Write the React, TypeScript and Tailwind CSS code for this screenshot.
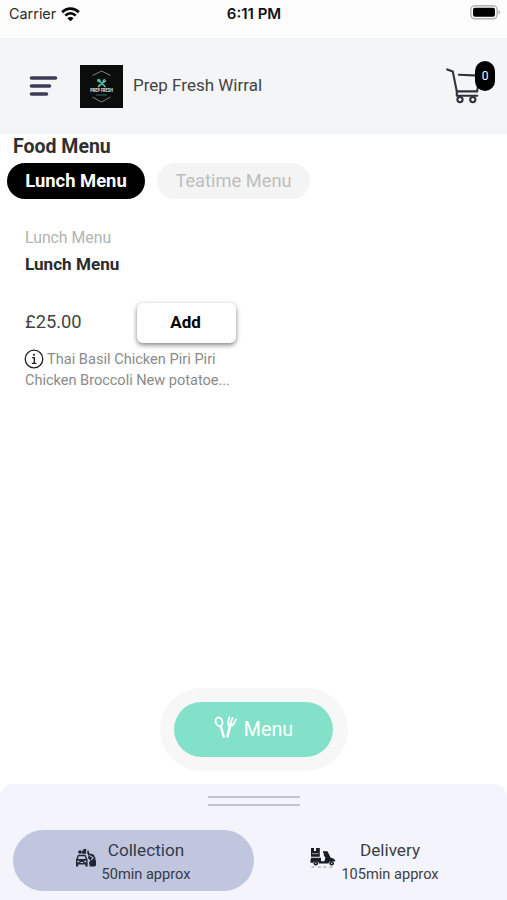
import React from 'react';

const WifiIcon = () => (
  <svg className="h-[15px] w-[19px]" viewBox="0 0 19 15" fill="none" stroke="#000" strokeWidth="2.7">
    <path d="M1.2 5.2C6 .3 13 .3 17.8 5.2" />
    <path d="M4.3 8.6C7.4 5.6 11.6 5.6 14.7 8.6" />
    <path d="M9.5 14.2L6.4 11.2C8.2 9.6 10.8 9.6 12.6 11.2Z" fill="#000" stroke="none" />
  </svg>
);

const BatteryIcon = () => (
  <svg className="h-[15px] w-[31px]" viewBox="0 0 31 15">
    <rect x="0.8" y="0.8" width="26.4" height="13" rx="4" fill="#fbfbfb" stroke="#b4b4b2" strokeWidth="1.5" />
    <rect x="3" y="2.8" width="22" height="9" rx="2" fill="#000" />
    <path d="M28.6 5C30.5 6 30.5 8.6 28.6 9.6Z" fill="#a9a9a7" />
  </svg>
);

const MenuLines = () => (
  <svg className="h-[22px] w-[29px]" viewBox="0 0 29 22" stroke="#3e3b57" strokeWidth="3.6" strokeLinecap="round">
    <path d="M2.5 3H26.5M2.5 11H20.5M2.5 19H17.5" />
  </svg>
);

const BrandLogo = () => (
  <svg className="h-[43px] w-[43px]" viewBox="0 0 43 43" fill="none">
    <rect width="43" height="43" fill="#0b0c0c" />
    <path d="M12.5 10.5L21.5 6L30.5 10.5M12.5 32L21.5 37L30.5 32" stroke="#8b8f8f" strokeWidth="0.9" />
    <path d="M19 15.5L25 21.5M24 16.5L18.5 21.5" stroke="#4fc3a6" strokeWidth="1.7" strokeLinecap="round" />
    <ellipse cx="18.9" cy="15.6" rx="1.6" ry="2" transform="rotate(-45 18.9 15.6)" fill="#4fc3a6" />
    <path d="M23 15.8L24.7 14.1M24.2 17L25.9 15.3" stroke="#7fe0c8" strokeWidth="1.2" />
    <text
      x="10.3"
      y="27.4"
      textLength="22.6"
      lengthAdjust="spacingAndGlyphs"
      fontSize="5.2"
      fontWeight="900"
      fill="#d9dcdc"
      fontFamily="Roboto, sans-serif"
    >
      PREP FRESH
    </text>
    <path d="M16 30H27" stroke="#2b5f55" strokeWidth="1.2" />
  </svg>
);

const CartIcon = () => (
  <svg className="h-[38px] w-[36px]" viewBox="0 0 36 38" fill="none" stroke="#2f3237" strokeWidth="2.1" strokeLinecap="round" strokeLinejoin="round">
    <path d="M1.2 2.4L6.8 4.6L10.8 24.4H31.2L33 8.6L12.8 7.8" />
    <path d="M10.8 24.4V28.8H31.3" />
    <circle cx="14" cy="32.6" r="2.6" />
    <circle cx="26.8" cy="32.6" r="2.6" />
  </svg>
);

const InfoIcon = () => (
  <svg className="h-[20px] w-[20px] shrink-0" viewBox="0 0 20 20" fill="none" stroke="#222">
    <circle cx="10" cy="10" r="8.8" strokeWidth="1.3" />
    <circle cx="10" cy="5.8" r="1.1" fill="#222" stroke="none" />
    <path d="M8 8.6H10.3V14.2M7.8 14.4H12.5" strokeWidth="1.4" />
  </svg>
);

const CutleryIcon = () => (
  <svg className="h-[24px] w-[23px]" viewBox="0 0 23 24" fill="none" stroke="#fff" strokeWidth="1.8" strokeLinecap="round" strokeLinejoin="round">
    <ellipse cx="5" cy="6.8" rx="3.3" ry="4.5" transform="rotate(-20 5 6.8)" />
    <path d="M6.7 11.1L9.7 21.6" strokeWidth="2.4" />
    <path d="M15.4 2.3L14 7.5C13.6 9.2 14.4 10.5 16 11C17.7 11.4 19.1 10.6 19.8 9L21.9 4.2M18.5 2.8L16.8 8.3" />
    <path d="M16 11L13.4 21.6" strokeWidth="2.6" />
    <path d="M15 8.6L18.4 9.2" strokeWidth="2.2" />
  </svg>
);

const CollectionIcon = () => (
  <svg className="h-[20px] w-[22px]" viewBox="0 0 22 20" fill="#202635">
    <path d="M1 11.5L3 6.8H10.4L12.6 11.5V18.5H10.4V16.5H3.2V18.5H1Z" />
    <path d="M3.9 8.2H9.6L10.8 11H2.7Z" fill="#bec5dc" />
    <path d="M2.3 12.8H4.4V14.2H2.3ZM9.3 12.8H11.4V14.2H9.3ZM5.5 14H8.2V15H5.5Z" fill="#bec5dc" />
    <circle cx="5" cy="4" r="1.8" />
    <path d="M6.6 4.6L8.4 1.2L11.2 .8L11 5.8H7Z" />
    <path d="M13 1.5L14.6 5.5L18.6 6.6L20.4 10V12L21 12.6V17.5L19.5 18.5H14.7L14 14.3L15.5 12.8L12.8 9.8L13.6 8L12 4.8Z" />
    <path d="M14.4 7.4L18.2 9.8L16.2 12" fill="none" stroke="#bec5dc" strokeWidth="1.1" />
  </svg>
);

const DeliveryIcon = () => (
  <svg className="h-[21px] w-[26px]" viewBox="0 0 26 21" fill="#191d25">
    <path d="M1 1H4V4H6V1H9.8V9.8H1Z" />
    <path d="M2 6.7H8.8" stroke="#f3f4fc" strokeWidth="0.6" />
    <path d="M1 10.8H11V14.2H14.4L15.4 10.6L13.8 8.5V6H13V4.2H17.5L20.7 10.7C23.7 11 25 12.5 25.5 14.2H21.5C19.5 14.2 18.6 15.7 18.4 16.6H9.1C8.4 13.7 4 13.4 2.6 16.1L.3 15.6Z" />
    <circle cx="5.8" cy="16.2" r="2.3" />
    <circle cx="21.7" cy="16.2" r="2.3" />
    <circle cx="5.8" cy="16.2" r="0.7" fill="#eef0f9" />
    <circle cx="21.7" cy="16.2" r="0.7" fill="#eef0f9" />
    <path d="M1.5 20H4.5M8 20H11M13.5 20H16.5M19.5 20H22.5" stroke="#777a84" strokeWidth="0.8" />
  </svg>
);

interface OrderModeProps {
  icon: React.ReactNode;
  label: string;
  wait: string;
  active?: boolean;
}

const OrderMode: React.FC<OrderModeProps> = ({ icon, label, wait, active = false }) => (
  <button
    className={`flex h-[61px] w-[241px] items-center justify-center gap-[5px] rounded-full ${
      active ? 'bg-[#bfc6dd] pr-[2px] text-[#353a49]' : 'text-[#3b3e48]'
    }`}
  >
    <span className="mt-[-6px]">{icon}</span>
    <span className="flex flex-col items-center pt-[2px]">
      <span className="text-[17.2px] leading-[25px]">{label}</span>
      <span className="text-[14.6px] leading-[23px]">{wait}</span>
    </span>
  </button>
);

export default function App() {
  return (
    <div className="flex h-[900px] w-[507px] flex-col overflow-hidden bg-white font-[Roboto,sans-serif] text-[#333]">
      {/* Status bar */}
      <div className="grid h-[38px] shrink-0 grid-cols-3 items-start bg-[#fcfcfc] pt-[5px] pr-[6px] pl-[9px] font-[Inter,sans-serif]">
        <div className="flex items-center gap-[5px] text-[14.4px] leading-[18px] text-[#2b2b2b]">
          <span>Carrier</span>
          <WifiIcon />
        </div>
        <div className="pr-[2px] text-center text-[15px] leading-[18px] font-semibold text-[#111]">6:11 PM</div>
        <div className="flex justify-end">
          <BatteryIcon />
        </div>
      </div>

      {/* Store header */}
      <header className="flex h-[96px] shrink-0 items-center bg-[#f3f5f7] pl-[29px]">
        <MenuLines />
        <div className="ml-[22px]">
          <BrandLogo />
        </div>
        <span className="ml-[10px] text-[17px] text-[#444]">Prep Fresh Wirral</span>
        <div className="relative mr-[25px] ml-auto">
          <CartIcon />
          <span className="absolute -top-[6px] left-[29px] flex h-[30px] w-[20px] items-center justify-center rounded-full bg-black text-[12px] text-white">
            0
          </span>
        </div>
      </header>

      <main className="flex flex-1 flex-col">
        <h1 className="pt-px pl-[13px] text-[19.5px] leading-[24px] font-bold text-[#2f2f2f]">Food Menu</h1>

        <div className="mt-1 flex gap-3 pl-[7px]">
          <button className="h-[36px] w-[138px] rounded-full bg-black text-[18.4px] font-bold text-white">
            Lunch Menu
          </button>
          <button className="h-[36px] w-[153px] rounded-full bg-[#f4f4f4] text-[18.3px] text-[#bdbdbd]">
            Teatime Menu
          </button>
        </div>

        <section className="mt-[27px] ml-[25px] w-[211px]">
          <p className="text-[15.8px] leading-[24px] text-[#b3b3b3]">Lunch Menu</p>
          <h2 className="text-[17.1px] leading-[28px] font-bold text-[#2b2b2b]">Lunch Menu</h2>
          <div className="mt-[25px] flex items-center justify-between">
            <span className="pb-[2px] text-[18.3px] text-[#444]">£25.00</span>
            <button className="h-[40px] w-[99px] rounded-[6px] bg-white pr-[2px] text-[17px] font-bold text-black shadow-[0_2px_5px_rgba(0,0,0,0.5)]">
              Add
            </button>
          </div>
          <div className="mt-[6px] text-[14.6px] leading-[21px] whitespace-nowrap text-[#8b8b8b]">
            <div className="-ml-px flex h-[21px] items-center gap-[3px]">
              <span className="pb-px">
                <InfoIcon />
              </span>
              <span>Thai Basil Chicken Piri Piri</span>
            </div>
            <div className="tracking-[-0.04px]">Chicken Broccoli New potatoe...</div>
          </div>
        </section>

        <div className="mt-auto mb-[13px] ml-[160px] flex h-[83px] w-[188px] items-center rounded-full bg-[#f7f7f7] pl-[14px]">
          <button className="flex h-[55px] w-[159px] items-center justify-center gap-[7px] rounded-full bg-[#83e1c9] text-[19.7px] text-white">
            <span className="mt-[-6px]">
              <CutleryIcon />
            </span>
            <span className="pt-px">Menu</span>
          </button>
        </div>
      </main>

      {/* Order mode sheet */}
      <footer className="h-[116px] shrink-0 rounded-t-[14px] bg-[#f3f4fc]">
        <div className="mx-auto flex h-[46px] w-[92px] flex-col gap-[6px] pt-[12px]">
          <div className="h-[2px] bg-[#c4c4c8]" />
          <div className="h-[2px] bg-[#c4c4c8]" />
        </div>
        <div className="flex pl-[13px]">
          <OrderMode icon={<CollectionIcon />} label="Collection" wait="50min approx" active />
          <OrderMode icon={<DeliveryIcon />} label="Delivery" wait="105min approx" />
        </div>
      </footer>
    </div>
  );
}
